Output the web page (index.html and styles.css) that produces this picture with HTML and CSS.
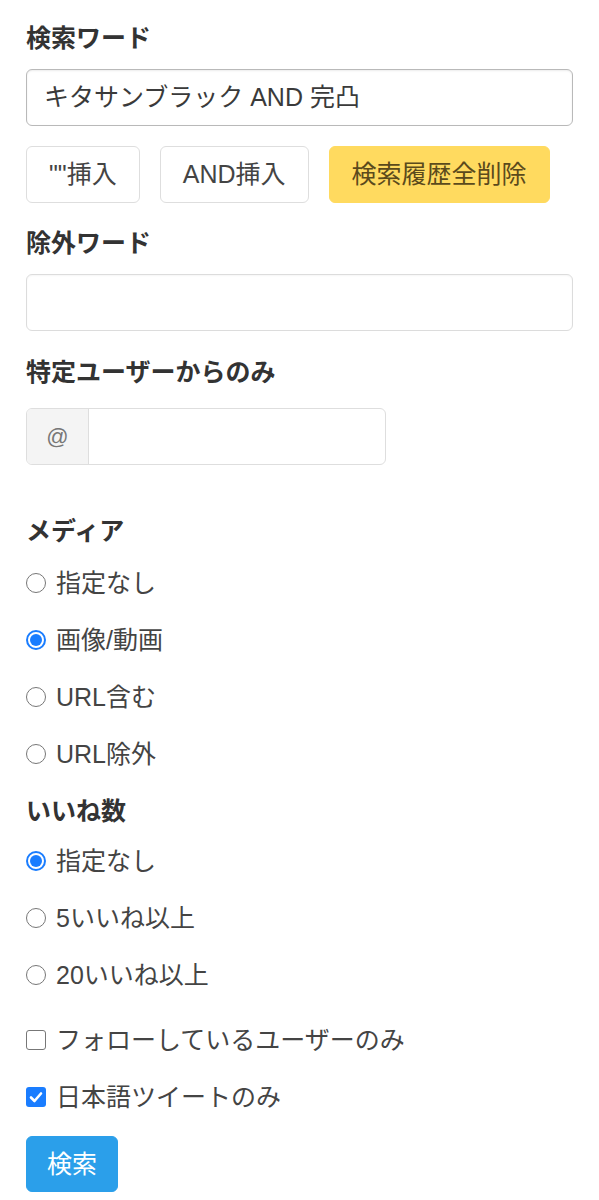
FILE: index.html
```html
<!DOCTYPE html>
<html lang="ja">
<head>
<meta charset="utf-8">
<link rel="stylesheet" href="styles.css">
</head>
<body>
<form class="form">
  <div class="label label-first">検索ワード</div>
  <div class="text-input text-input-active">キタサンブラック AND 完凸</div>
  <div class="btn-row">
    <button type="button" class="btn">""挿入</button>
    <button type="button" class="btn">AND挿入</button>
    <button type="button" class="btn btn-warning">検索履歴全削除</button>
  </div>
  <div class="label label-second">除外ワード</div>
  <div class="text-input"></div>
  <div class="label label-third">特定ユーザーからのみ</div>
  <div class="input-group">
    <span class="addon">@</span>
    <span class="group-field"></span>
  </div>

  <div class="label label-media">メディア</div>
  <label class="option"><span class="radio"></span>指定なし</label>
  <label class="option"><span class="radio checked"></span>画像/動画</label>
  <label class="option"><span class="radio"></span>URL含む</label>
  <label class="option"><span class="radio"></span>URL除外</label>

  <div class="label label-likes">いいね数</div>
  <label class="option"><span class="radio checked"></span>指定なし</label>
  <label class="option"><span class="radio"></span>5いいね以上</label>
  <label class="option"><span class="radio"></span>20いいね以上</label>

  <label class="option option-check-first"><span class="check"></span>フォローしているユーザーのみ</label>
  <label class="option"><span class="check checked"><svg viewBox="0 0 20 20" width="20" height="20"><path d="M5 10.5 L8.5 14 L15 6.5" fill="none" stroke="#fff" stroke-width="2.6" stroke-linecap="round" stroke-linejoin="round"/></svg></span>日本語ツイートのみ</label>

  <button type="button" class="btn btn-primary">検索</button>
</form>
</body>
</html>
```
FILE: styles.css
```css
* { box-sizing: border-box; }
html, body { margin: 0; padding: 0; background: #fff; }
body {
  font-family: "Liberation Sans", "Noto Sans CJK JP", sans-serif;
  font-size: 25px;
  color: #444;
}
.form {
  display: flex;
  flex-direction: column;
  align-items: flex-start;
  padding: 20px 26px 0 26px;
}
.label {
  font-weight: bold;
  color: #333;
  line-height: 36px;
  margin-bottom: 13px;
}
.label-second { margin-top: 22px; }
.label-third { margin-top: 23px; margin-bottom: 18px; }
.label-media { margin-top: 48px; margin-bottom: 16px; }
.label-likes { margin-top: 0; margin-bottom: 14px; }

.text-input {
  width: 547px;
  height: 57px;
  border: 1px solid #dcdcdc;
  border-radius: 6px;
  padding: 0 17px;
  line-height: 55px;
  color: #3a3a3a;
  white-space: nowrap;
  box-shadow: inset 0 1px 2px rgba(0,0,0,0.04);
}
.text-input-active {
  border: 1.5px solid #b9b9b9;
  box-shadow: inset 0 1px 2px rgba(0,0,0,0.08);
}
.btn-row {
  display: flex;
  gap: 20px;
  margin-top: 20px;
}
.btn {
  font-family: inherit;
  font-size: 25px;
  height: 57px;
  padding: 0 22px;
  border: 1px solid #dedede;
  border-radius: 6px;
  background: #fff;
  color: #444;
  line-height: 55px;
  cursor: pointer;
}
.btn-warning {
  background: #ffda5f;
  border-color: #ffda5f;
  color: #5b4a1c;
}
.btn-primary {
  margin-top: 0;
  height: 56px;
  padding: 0 20px;
  background: #2b9fea;
  border-color: #2b9fea;
  color: #fff;
}
.input-group {
  display: flex;
  width: 360px;
  height: 57px;
  border: 1px solid #dedede;
  border-radius: 6px;
  overflow: hidden;
}
.addon {
  width: 62px;
  background: #f4f4f4;
  border-right: 1px solid #dedede;
  color: #777;
  font-size: 22px;
  display: flex;
  align-items: center;
  justify-content: center;
}
.group-field { flex: 1; }

.option {
  display: flex;
  align-items: center;
  gap: 10px;
  line-height: 36px;
  margin-bottom: 21px;
  color: #444;
}
.option-check-first { margin-top: 8px; }
.radio {
  width: 20px;
  height: 20px;
  border-radius: 50%;
  border: 1.5px solid #777;
  flex: none;
  position: relative;
}
.radio.checked {
  border: 2px solid #1a7dff;
}
.radio.checked::after {
  content: "";
  position: absolute;
  left: 2px;
  top: 2px;
  width: 12px;
  height: 12px;
  border-radius: 50%;
  background: #1a7dff;
}
.check {
  width: 20px;
  height: 20px;
  border-radius: 3px;
  border: 1.5px solid #777;
  flex: none;
  display: flex;
}
.check.checked {
  background: #1a7dff;
  border: none;
}
.check svg { display: block; }
```
